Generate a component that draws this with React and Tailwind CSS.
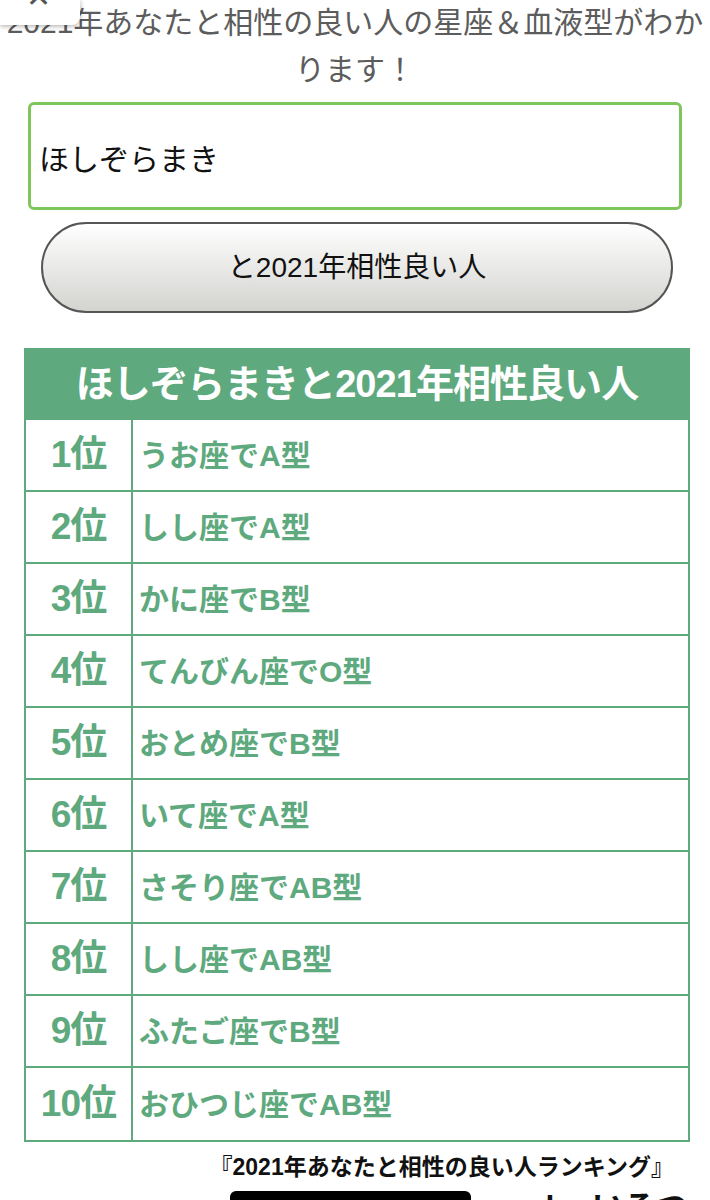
import React from "react";

const ranking = [
  { rank: "1位", text: "うお座でA型" },
  { rank: "2位", text: "しし座でA型" },
  { rank: "3位", text: "かに座でB型" },
  { rank: "4位", text: "てんびん座でO型" },
  { rank: "5位", text: "おとめ座でB型" },
  { rank: "6位", text: "いて座でA型" },
  { rank: "7位", text: "さそり座でAB型" },
  { rank: "8位", text: "しし座でAB型" },
  { rank: "9位", text: "ふたご座でB型" },
  { rank: "10位", text: "おひつじ座でAB型" },
];

const font = { fontFamily: '"Liberation Sans", "Noto Sans CJK JP", sans-serif' };

export default function App() {
  return (
    <div className="relative w-[710px] h-[1200px] overflow-hidden bg-white" style={font}>
      {/* close tab overlay */}
      <div className="absolute left-0 top-0 w-[80px] h-[25px] bg-white rounded-br-lg shadow-[0_1px_5px_rgba(0,0,0,0.35)] z-10 overflow-hidden">
        <div className="absolute left-[26px] -top-[18px] text-[30px] leading-none text-[#555]">✕</div>
      </div>

      <p className="-ml-[8px] w-[726px] -mt-[1px] text-center text-[30px] leading-[47px] text-[#5c5c5c] font-normal">
        2021年あなたと相性の良い人の星座＆血液型がわかります！
      </p>

      <div className="mx-[28px] mt-[9px] h-[108px] border-[3px] border-[#7ec65c] rounded-md flex items-center pl-[8px] pt-[6px]">
        <span className="text-[30px] text-[#111]">ほしぞらまき</span>
      </div>

      <button className="ml-[41px] mt-[12px] w-[632px] h-[91px] rounded-full border-2 border-[#555] bg-linear-to-b from-white to-[#d3d4d0] flex items-center justify-center">
        <span className="text-[28px] text-[#111]">と2021年相性良い人</span>
      </button>

      <div className="ml-[24px] mt-[35px] w-[666px] border-x-2 border-b-2 border-[#5ea97e]">
        <div className="h-[72px] bg-[#5ea97e] flex items-center justify-center">
          <span className="text-[38px] font-bold text-white tracking-tight">ほしぞらまきと2021年相性良い人</span>
        </div>
        {ranking.map((r, i) => (
          <div
            key={r.rank}
            className={`flex h-[72px] ${i < ranking.length - 1 ? "border-b-2 border-[#5ea97e]" : ""}`}
          >
            <div className="w-[107px] border-r-2 border-[#5ea97e] flex items-center justify-center">
              <span className="text-[37px] font-bold text-[#5ea97e] tracking-tight">{r.rank}</span>
            </div>
            <div className="flex-1 flex items-center pl-[6px]">
              <span className="text-[30px] font-bold text-[#5ea97e]">{r.text}</span>
            </div>
          </div>
        ))}
      </div>

      <p className="mt-[8px] text-right pr-[36px] text-[23px] font-bold text-[#111]">
        『2021年あなたと相性の良い人ランキング』
      </p>
      <div className="flex items-start mt-[6px]">
        <div className="ml-[230px] w-[255px] h-[40px] bg-black rounded-md" />
        <span className="ml-[75px] -mt-[8px] text-[32px] font-bold text-[#111]">by いろつく</span>
      </div>
    </div>
  );
}
